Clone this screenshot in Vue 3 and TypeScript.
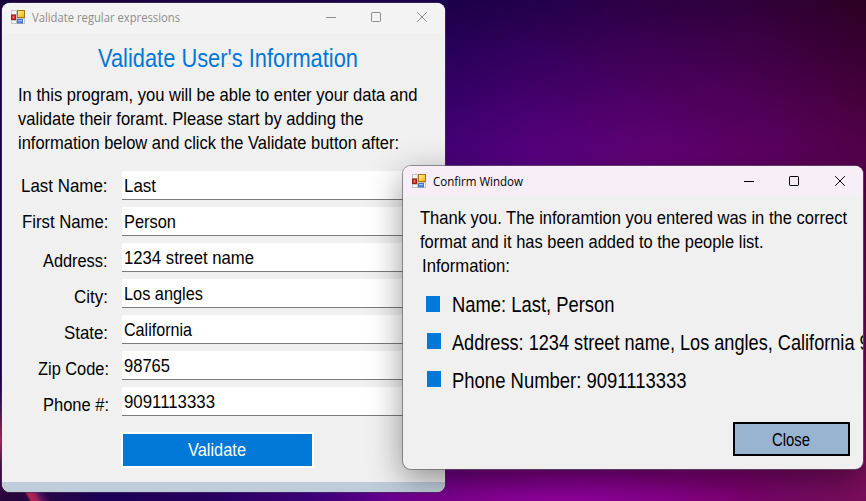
<script setup lang="ts">
import { h, type FunctionalComponent } from 'vue'

interface Line {
  text: string
  width: number
}

interface Field extends Line {
  label: string
  labelWidth: number
  low?: boolean
  wide?: boolean
}

// One line of condensed text, set to a given advance width.
const Fit: FunctionalComponent<Line> = (props) =>
  h('svg', { class: 'fit', width: props.width }, [
    h('text', { x: 0, y: '0.85em', textLength: props.width, lengthAdjust: 'spacingAndGlyphs' }, props.text),
  ])
Fit.props = ['text', 'width']

const intro: Line[] = [
  { text: 'In this program, you will be able to enter your data and', width: 399.5 },
  { text: 'validate their foramt. Please start by adding the', width: 345.5 },
  { text: 'information below and click the Validate button after:', width: 381 },
]

const fields: Field[] = [
  { label: 'Last Name:', labelWidth: 86.5, text: 'Last', width: 32 },
  { label: 'First Name:', labelWidth: 86.5, text: 'Person', width: 52, wide: true },
  { label: 'Address:', labelWidth: 64.5, text: '1234 street name', width: 130, low: true },
  { label: 'City:', labelWidth: 34, text: 'Los angles', width: 79, low: true },
  { label: 'State:', labelWidth: 44, text: 'California', width: 68, low: true },
  { label: 'Zip Code:', labelWidth: 71, text: '98765', width: 46, low: true, wide: true },
  { label: 'Phone #:', labelWidth: 66, text: '9091113333', width: 91, low: true, wide: true },
]

const message: Line[] = [
  { text: 'Thank you. The inforamtion you entered was in the correct', width: 427 },
  { text: 'format and it has been added to the people list.', width: 343.5 },
]

const details: Line[] = [
  { text: 'Name: Last, Person', width: 162.5 },
  { text: 'Address: 1234 street name, Los angles, California 98765', width: 458 },
  { text: 'Phone Number: 9091113333', width: 234.5 },
]
</script>

<template>
  <div class="desktop">
    <svg width="0" height="0" class="defs">
      <defs>
        <linearGradient id="gold" x1="0" y1="0" x2="1" y2="1">
          <stop offset="0" stop-color="#fff3a0" /><stop offset="1" stop-color="#f0ae10" />
        </linearGradient>
        <symbol id="form-icon" viewBox="0 0 14 14">
          <path d="M0 0H14V14H0Z" fill="#c2c3c6" />
          <path d="M1 1H5V4H1ZM1 11H5V13H1ZM12 9H13V13H12Z" fill="#f6f6f6" />
          <rect x="0.5" y="5" width="4" height="4.5" fill="#d4382c" stroke="#9c221c" />
          <rect x="2" y="6.5" width="1" height="1.5" fill="#f8a090" />
          <rect x="6.5" y="0.5" width="7" height="7" fill="url(#gold)" stroke="#a97808" />
          <rect x="6.5" y="9.5" width="5" height="3.5" fill="#4f8df0" stroke="#4a74c8" />
          <path d="M7 10.5H11" stroke="#9cc4ff" />
        </symbol>
        <symbol id="caption-icons" viewBox="0 0 104 12">
          <path d="M0 6.5H10" fill="none" stroke="currentColor" />
          <rect x="45.5" y="1.5" width="9" height="9" rx="0.7" fill="none" stroke="currentColor" />
          <path d="M91.2 1.2L100.8 10.8M100.8 1.2L91.2 10.8" fill="none" stroke="currentColor" />
        </symbol>
      </defs>
    </svg>

    <section class="window main">
      <header class="titlebar">
        <svg class="app-icon"><use href="#form-icon" /></svg>
        <Fit class="fit" text="Validate regular expressions" :width="148" />
        <svg class="caption"><use href="#caption-icons" /></svg>
      </header>
      <h1><Fit class="fit" text="Validate User's Information" :width="260" /></h1>
      <div class="copy">
        <div v-for="line in intro" :key="line.text"><Fit class="fit" v-bind="line" /></div>
      </div>
      <div class="form">
        <div v-for="f in fields" :key="f.label" class="row">
          <label :class="{ low: f.low, wide: f.wide }"><Fit class="fit" :text="f.label" :width="f.labelWidth" /></label>
          <div class="input"><Fit class="fit" :text="f.text" :width="f.width" /></div>
        </div>
      </div>
      <button class="validate"><Fit class="fit" text="Validate" :width="58" /></button>
      <footer class="status"></footer>
    </section>

    <section class="window confirm">
      <header class="titlebar">
        <svg class="app-icon"><use href="#form-icon" /></svg>
        <Fit class="fit" text="Confirm Window" :width="90" />
        <svg class="caption"><use href="#caption-icons" /></svg>
      </header>
      <div class="copy">
        <div v-for="line in message" :key="line.text"><Fit class="fit" v-bind="line" /></div>
        <div class="info"><Fit class="fit" text="Information:" :width="88" /></div>
      </div>
      <ul>
        <li v-for="d in details" :key="d.text"><i></i><span><Fit class="fit" v-bind="d" /></span></li>
      </ul>
      <button class="close"><Fit class="fit" text="Close" :width="38" /></button>
    </section>
  </div>
</template>

<style>
body {
  margin: 0;
  overflow: hidden;
}
</style>

<style scoped>
* {
  box-sizing: border-box;
}
.desktop {
  position: relative;
  isolation: isolate;
  width: 866px;
  height: 501px;
  overflow: hidden;
  font-family: "Liberation Sans", Arial, sans-serif;
  font-size: 18.67px;
  color: #000;
  background: linear-gradient(90deg, #190048 0, #190048 50%, #48007c 51.5%, #5a0084 61%, #640078 75%, #600065 88%, #57004c 100%);
}
.desktop::before,
.desktop::after {
  content: "";
  position: absolute;
  inset: 0;
  z-index: -1;
}
.desktop::before {
  background: linear-gradient(90deg, #17003a 0, #1b0048 52%, #22004a 61%, #2b0045 72%, #30003b 86%, #2b0023 100%);
  mask-image: linear-gradient(180deg, #000 0, transparent 165px);
}
.desktop::after {
  background:
    linear-gradient(62deg, transparent 30%, #b02352 36%, #a02055 46%, #4a1058 58%, transparent 72%) 12px 480px / 44px 21px no-repeat,
    linear-gradient(180deg, #190048 75%, #38104f 80%, #a02a50 88%, #421044 93%, #28053a 100%) 0 0 / 3px 501px no-repeat,
    radial-gradient(ellipse 200px 32px at 560px 501px, rgba(155, 0, 170, 0.75) 0, transparent 100%),
    linear-gradient(90deg, #28053a 0, #250644 5%, #1b0054 12%, #26005f 24%, #3b0078 36%, #62008a 45%, #72007e 56%, #7c0080 70%, #7d0070 84%, #760a62 93%, #7c0d5c 100%);
  mask-image: linear-gradient(180deg, transparent 165px, #000 440px);
}
.defs {
  position: absolute;
}
.fit {
  display: inline-block;
  flex: none;
  height: 1em;
  overflow: visible;
  vertical-align: -0.15em;
  fill: currentColor;
}
.window {
  position: absolute;
  display: flex;
  flex-direction: column;
  overflow: hidden;
  border-radius: 8px;
  background: #f0f0f0;
}
.main {
  left: 2px;
  top: 3px;
  width: 443px;
  height: 489px;
  box-shadow: 0 0 0 1px rgba(70, 55, 90, 0.6);
}
.confirm {
  left: 403px;
  top: 166px;
  width: 460px;
  height: 303px;
  box-shadow: 0 0 0 1px rgba(100, 90, 105, 0.65), 0 10px 34px rgba(0, 0, 0, 0.42);
}
.titlebar {
  display: flex;
  flex: none;
  align-items: center;
  height: 30px;
  padding: 0 17px 2px 9px;
  background: #f3f3f3;
  color: #8d8d8d;
  font-family: "Open Sans", "Noto Sans", sans-serif;
  font-size: 12px;
}
.titlebar .fit {
  margin-top: 2px;
}
.confirm .titlebar {
  padding-bottom: 1px;
  background: #f7eef8;
  color: #000;
}
.app-icon {
  width: 14px;
  height: 14px;
  margin-right: 7px;
}
.caption {
  width: 104px;
  height: 12px;
  margin-left: auto;
  margin-right: -2px;
}
h1 {
  margin: 9px 0 0 9px;
  text-align: center;
  font-size: 26.67px;
  font-weight: 400;
  line-height: 32px;
  color: #0078d7;
}
.copy {
  white-space: nowrap;
  line-height: 24px;
}
.copy div {
  height: 24px;
}
.main .copy {
  margin: 9px 0 0 16px;
}
.form {
  display: flex;
  flex-direction: column;
  gap: 7px;
  margin-top: 16px;
}
.row {
  display: flex;
  height: 29px;
}
label {
  width: 105.5px;
  margin-right: 14.5px;
  text-align: right;
  line-height: 29px;
}
label.low {
  padding-top: 3px;
}
label.wide {
  width: 106.5px;
  margin-right: 13.5px;
}
.input {
  flex: 1;
  padding-left: 1.6px;
  background: #fff;
  border-bottom: 1px solid #7a7a7a;
  line-height: 29px;
}
button {
  padding: 0;
  font: inherit;
  border-radius: 0;
}
.validate {
  width: 193px;
  height: 36px;
  margin: 16px 0 0 119px;
  padding-right: 2px;
  border: 2px solid #fff;
  background: #0078d7;
  color: #fff;
}
.status {
  height: 10px;
  margin-top: auto;
  background: #bfcddb;
}
.confirm .copy {
  padding: 10px 0 0 17px;
}
.confirm .copy .info {
  padding-left: 2px;
}
ul {
  margin: 7px 0 0;
  padding: 0 0 0 23px;
  list-style: none;
  font-size: 21.33px;
}
li {
  display: flex;
  align-items: center;
  height: 38px;
  white-space: nowrap;
}
li span {
  padding-top: 3px;
}
li i {
  flex: none;
  width: 14px;
  height: 16px;
  margin: 0 11px 2px 1px;
  background: #0078d7;
}
li:first-child i {
  margin: 0 12px 0 0;
}
.close {
  width: 117px;
  height: 34px;
  margin: auto 13px 13px auto;
  padding: 2px 2px 0 0;
  border: 2px solid #000;
  background: #99b4d1;
  color: #000;
}
</style>
